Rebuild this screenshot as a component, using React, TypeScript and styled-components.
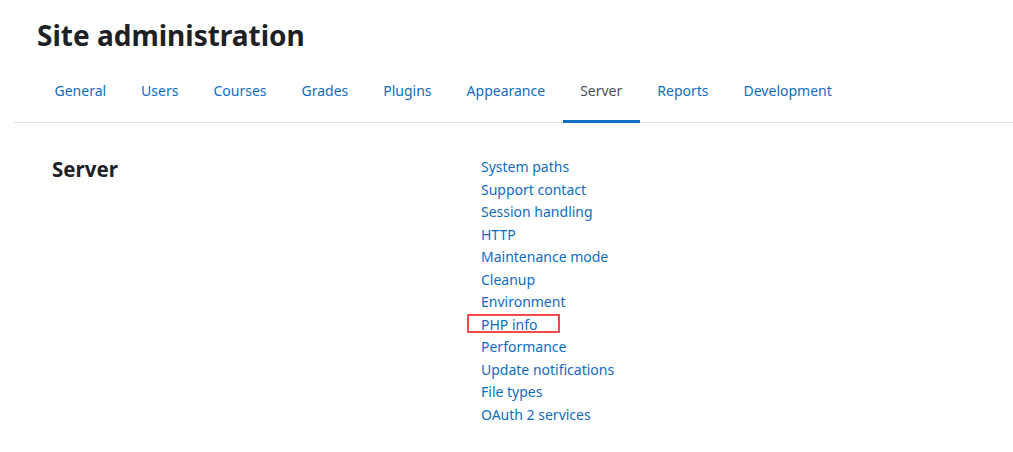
import React from "react";
import styled, { createGlobalStyle } from "styled-components";

const Global = createGlobalStyle`
  html, body { margin: 0; padding: 0; background: #fff; }
  body { font-family: "Noto Sans", "Open Sans", sans-serif; color: #1d2125; }
`;

const Page = styled.div`
  padding: 0 0 0 14px;
`;

const Title = styled.h1`
  margin: 0;
  padding: 15px 0 0 23px;
  font-size: 28px;
  line-height: 40px;
  font-weight: 700;
  color: #1d2125;
`;

const TabBar = styled.nav`
  margin-top: 14px;
  display: flex;
  padding-left: 23px;
  border-bottom: 1px solid #dee2e6;
`;

const Tab = styled.a<{ $active?: boolean }>`
  display: block;
  padding: 11px 17.5px 18px;
  font-size: 14px;
  line-height: 22px;
  color: ${(p) => (p.$active ? "#495057" : "#0f6cbf")};
  text-decoration: none;
  border-bottom: 3px solid ${(p) => (p.$active ? "#0f6cbf" : "transparent")};
  margin-bottom: -1px;
`;

const Content = styled.div`
  display: grid;
  grid-template-columns: 429px 1fr;
  padding: 32px 0 0 38px;
`;

const Heading = styled.h2`
  margin: 0;
  font-size: 20.5px;
  line-height: 28px;
  font-weight: 700;
  color: #1d2125;
`;

const List = styled.ul`
  list-style: none;
  margin: 0;
  padding: 1px 0 0;
`;

const Item = styled.li`
  font-size: 14px;
  line-height: 22.55px;
`;

const Link = styled.a<{ $boxed?: boolean }>`
  position: relative;
  color: #0f6cbf;
  text-decoration: none;
  ${(p) =>
    p.$boxed &&
    `&::after {
      content: "";
      position: absolute;
      left: -14px;
      top: -1px;
      width: 89px;
      height: 15px;
      border: 2px solid #f24b4b;
    }`}
`;

const tabs = ["General", "Users", "Courses", "Grades", "Plugins", "Appearance", "Server", "Reports", "Development"];
const items = [
  "System paths",
  "Support contact",
  "Session handling",
  "HTTP",
  "Maintenance mode",
  "Cleanup",
  "Environment",
  "PHP info",
  "Performance",
  "Update notifications",
  "File types",
  "OAuth 2 services",
];

export default function App() {
  return (
    <Page>
      <Global />
      <Title>Site administration</Title>
      <TabBar>
        {tabs.map((t) => (
          <Tab key={t} $active={t === "Server"}>
            {t}
          </Tab>
        ))}
      </TabBar>
      <Content>
        <Heading>Server</Heading>
        <List>
          {items.map((i) => (
            <Item key={i}>
              <Link $boxed={i === "PHP info"}>{i}</Link>
            </Item>
          ))}
        </List>
      </Content>
    </Page>
  );
}
